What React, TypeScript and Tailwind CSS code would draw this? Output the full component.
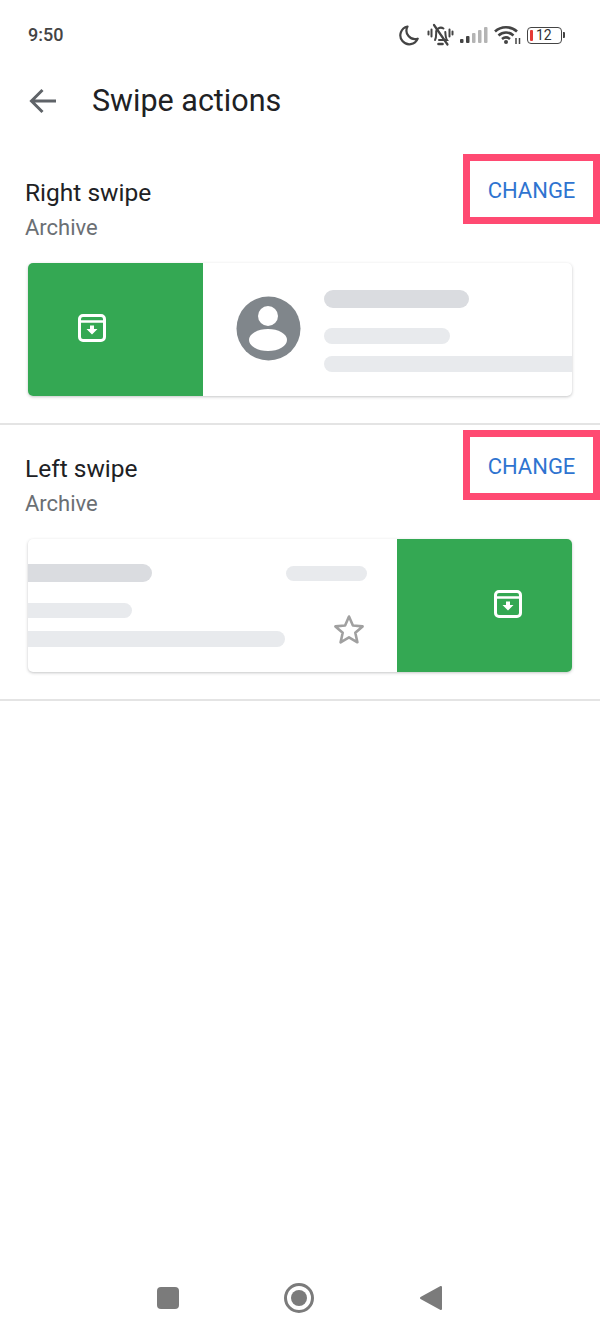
const font = "font-['Roboto',sans-serif]";

function ArchiveIcon() {
  return (
    <svg width="30" height="30" viewBox="0 0 30 30" fill="none">
      <rect x="2.500" y="2.500" width="25" height="25" rx="3.500" stroke="#fff" strokeWidth="3" />
      <path d="M3 8.500h24" stroke="#fff" strokeWidth="2.400" />
      <path d="M13 12.500h4v3.600h3.500L15 21.500l-5.500-5.400H13z" fill="#fff" />
    </svg>
  );
}

function StatusIcons() {
  return (
    <div className="flex items-center">
      <svg width="22" height="22" viewBox="0 0 22 22" fill="none">
        <path d="M9.500 2.500a9 9 0 1 0 10.200 12.200A8.600 8.600 0 0 1 9.500 2.500z" stroke="#444" strokeWidth="2.200" strokeLinejoin="round" />
      </svg>
      <svg className="ml-[7px]" width="27" height="24" viewBox="0 0 27 24" fill="none" stroke="#444" strokeWidth="2" strokeLinecap="round">
        <path d="M8 17c1.200-2 1.200-4 1.200-7A4.700 4.700 0 0 1 16.500 5.500M18.300 9c.2 3.200.3 6 1.700 8H12" />
        <path d="M11.500 21h4" strokeWidth="2.600" />
        <path d="M7 2 20.500 21.500" strokeWidth="2.200" />
        <path d="M4.500 6.500v7M1.500 8.500v3M22.500 6.500v7M25.500 8.500v3" />
      </svg>
      <svg className="ml-[6px]" width="28" height="18" viewBox="0 0 28 18">
        <rect x="0" y="13" width="3.500" height="4" rx="1" fill="#444" />
        <rect x="6" y="10" width="3.500" height="7" rx="1" fill="#444" />
        <rect x="12" y="7" width="3.500" height="10" rx="1" fill="#b4b4b4" />
        <rect x="18" y="4" width="3.500" height="13" rx="1" fill="#b4b4b4" />
        <rect x="24" y="1" width="3.500" height="16" rx="1" fill="#b4b4b4" />
      </svg>
      <svg className="ml-[6px]" width="27" height="20" viewBox="0 0 27 20" fill="none" stroke="#444" strokeWidth="2.600">
        <path d="M1 6.500C7 .8 17 .8 23 6.500" />
        <path d="M4.500 10.500c4.500-4 10.500-4 15 0" />
        <path d="M8 14c2.500-2 5.500-2 8 0" />
        <circle cx="12" cy="17" r="2" fill="#444" stroke="none" />
        <path d="M22 13v6M25.500 13v6" strokeWidth="1.500" />
      </svg>
      <div className="ml-[6px] flex items-center">
        <div className="flex h-[17px] w-[35px] items-center rounded-[4px] border-[1.500px] border-[#444] pl-[2px]">
          <div className="h-[11px] w-[3px] rounded-[1px] bg-[#e53935]" />
          <span className="ml-[3px] text-[14px] leading-none text-[#333]">12</span>
        </div>
        <div className="ml-[1px] h-[6px] w-[2px] rounded-r-[1px] bg-[#444]" />
      </div>
    </div>
  );
}

function SectionHead({ title }: { title: string }) {
  return (
    <div className="flex justify-between">
      <div className="pl-[25px] pt-[23px]">
        <div className="text-[24.500px] leading-[32px] text-[#202124]">{title}</div>
        <div className="mt-[3px] text-[22px] leading-[32px] text-[#6b6f74]">Archive</div>
      </div>
      <div className="flex h-[70px] w-[137px] items-center justify-center border-[7px] border-[#ff4a72] pt-[2px] text-[22px] text-[#2f74d0]">
        CHANGE
      </div>
    </div>
  );
}

export default function App() {
  return (
    <div className={`${font} flex min-h-[1334px] w-[600px] flex-col bg-white`}>
      <div className="flex items-center justify-between pl-[28px] pr-[35px] pt-[22px]">
        <span className="text-[18px] font-medium leading-[26px] text-[#444]">9:50</span>
        <StatusIcons />
      </div>

      <div className="mt-[31px] flex h-[44px] items-center pl-[28px]">
        <svg width="30" height="28" viewBox="0 0 30 28" fill="none" stroke="#5f6368" strokeWidth="3">
          <path d="M28 14H4M14.500 3 3.500 14l11 11" />
        </svg>
        <h1 className="ml-[34px] text-[30.500px] font-normal text-[#202124]">Swipe actions</h1>
      </div>

      <div className="mt-[31px] h-[271px] border-b-2 border-[#e4e4e4]">
        <SectionHead title="Right swipe" />
        <div className="ml-[28px] mt-[19px] flex h-[133px] w-[544px] overflow-hidden rounded-[5px] bg-white shadow-[0_1px_3px_rgba(60,64,67,0.3)]">
          <div className="flex w-[175px] items-center justify-center bg-[#34a853] pb-[4px] pr-[47px]">
            <ArchiveIcon />
          </div>
          <div className="ml-[33px] mt-[33px] flex h-[65px] w-[65px] shrink-0 items-center justify-center">
            <svg width="65" height="65" viewBox="0 0 65 65">
              <circle cx="32.500" cy="32.500" r="32" fill="#80868b" />
              <circle cx="32" cy="20" r="10" fill="#fff" />
              <ellipse cx="32" cy="44" rx="19" ry="11" fill="#fff" />
            </svg>
          </div>
          <div className="ml-[23px] flex flex-1 flex-col pt-[27px]">
            <div className="h-[18px] w-[145px] rounded-full bg-[#dadce0]" />
            <div className="mt-[20px] h-[16px] w-[126px] rounded-full bg-[#e8eaed]" />
            <div className="mt-[12px] h-[16px] w-full rounded-l-full bg-[#e8eaed]" />
          </div>
        </div>
      </div>

      <div className="h-[276px] border-b-2 border-[#e4e4e4] pt-[5px]">
        <SectionHead title="Left swipe" />
        <div className="ml-[28px] mt-[19px] flex h-[133px] w-[544px] overflow-hidden rounded-[5px] bg-white shadow-[0_1px_3px_rgba(60,64,67,0.3)]">
          <div className="flex flex-1 flex-col pr-[4px] pt-[25px]">
            <div className="flex items-center justify-between pr-[26px]">
              <div className="h-[18px] w-[124px] rounded-r-full bg-[#dadce0]" />
              <div className="h-[15px] w-[81px] rounded-full bg-[#e8eaed]" />
            </div>
            <div className="mt-[21px] h-[15px] w-[104px] rounded-r-full bg-[#e8eaed]" />
            <div className="flex items-start justify-between pr-[28px]">
              <div className="mt-[13px] h-[16px] w-[257px] rounded-r-full bg-[#e8eaed]" />
              <svg className="-mt-[4px]" width="32" height="32" viewBox="0 0 32 32" fill="none">
                <path d="M16 2.500l3.900 9 9.700.9-7.300 6.400 2.100 9.500-8.400-5-8.400 5 2.100-9.500-7.300-6.400 9.700-.9z" stroke="#a0a0a0" strokeWidth="2.600" strokeLinejoin="round" />
              </svg>
            </div>
          </div>
          <div className="flex w-[175px] items-center justify-center bg-[#34a853] pb-[4px] pl-[46px]">
            <ArchiveIcon />
          </div>
        </div>
      </div>

      <div className="mt-auto flex h-[72px] items-center justify-center">
        <div className="h-[22px] w-[22px] rounded-[4px] bg-[#7b7b7b]" />
        <div className="ml-[105px] flex h-[30px] w-[30px] items-center justify-center rounded-full border-[3px] border-[#7b7b7b]">
          <div className="h-[16px] w-[16px] rounded-full bg-[#7b7b7b]" />
        </div>
        <svg className="ml-[105px]" width="24" height="26" viewBox="0 0 24 26">
          <path d="M22 2v22L2 13z" fill="#7b7b7b" stroke="#7b7b7b" strokeWidth="2" strokeLinejoin="round" />
        </svg>
      </div>
    </div>
  );
}
